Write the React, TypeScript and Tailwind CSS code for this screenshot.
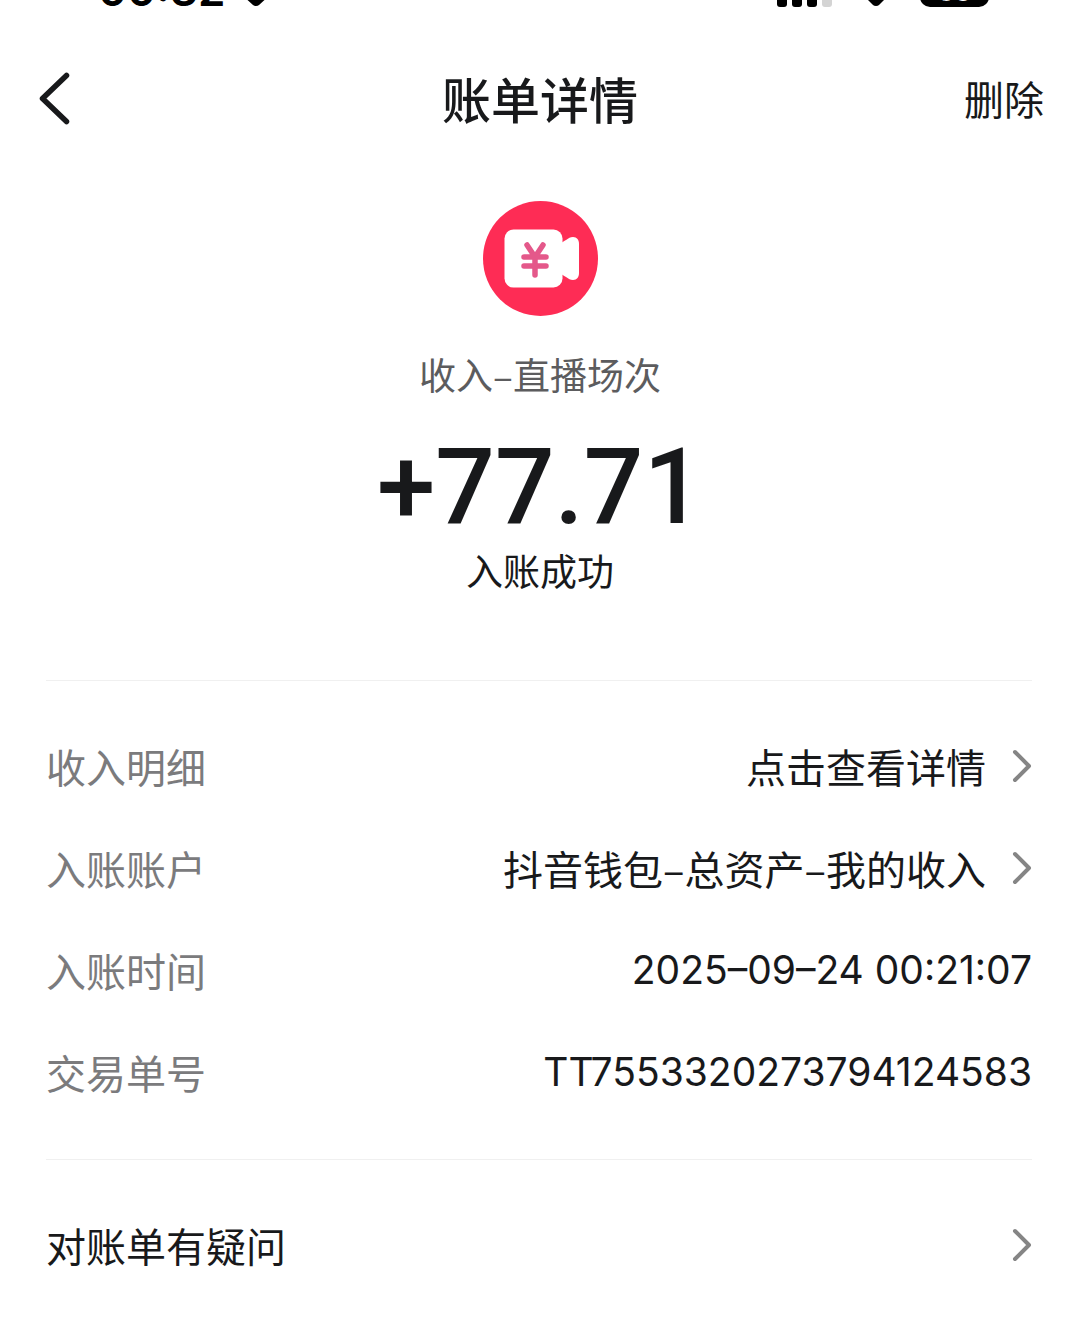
import type { ReactNode } from 'react'

const rows: Array<{ label: string; value: string; link?: boolean }> = [
    { label: '收入明细', value: '点击查看详情', link: true },
    { label: '入账账户', value: '抖音钱包–总资产–我的收入', link: true },
    { label: '入账时间', value: '2025–09–24 00:21:07' },
    { label: '交易单号', value: 'TT7553320273794124583' },
]

function Chevron() {
    return (
        <svg className="w-5 h-9 shrink-0" viewBox="0 0 20 36" fill="none" stroke="#858585" strokeWidth="4" aria-hidden="true">
            <path d="M3 4 17 18 3 32" strokeLinecap="round" strokeLinejoin="round" />
        </svg>
    )
}

function LiveIcon() {
    return (
        <svg className="w-[115px] h-[115px]" viewBox="0 0 115 115" aria-hidden="true">
            <circle cx="57.5" cy="57.5" r="57.5" fill="#fe2c55" />
            <rect x="21.5" y="28.5" width="58" height="58" rx="9" fill="#fff" />
            <path d="M78 42c2-1 3-2 5-3 3-2 4-3 7-3 4 0 6 3 6 7v29c0 4-2 7-6 7-3 0-4-1-7-3-2-1-3-2-5-3z" fill="#fff" />
            <path d="M44 44 52 56 60 44M41 56h22M41 65h22M52 56v18" fill="none" stroke="#e4588a" strokeWidth="5.5" strokeLinecap="round" strokeLinejoin="round" />
        </svg>
    )
}

function StatusBar() {
    return (
        <div className="h-2 overflow-hidden flex items-end justify-between pl-[98px] pr-[91px] text-black font-['Inter',sans-serif]">
            <div className="flex items-end gap-4">
                <span className="text-[44px] leading-9 font-semibold">00:32</span>
                <svg className="w-8 h-8" viewBox="0 0 32 32" aria-hidden="true">
                    <path d="M14 30Q12 30 11 29L0 19V8h28v11L17 29Q16 30 14 30z" />
                </svg>
            </div>
            <div className="flex items-end">
                <svg className="w-14 h-8" viewBox="0 0 56 32" aria-hidden="true">
                    <rect x="1" y="20" width="10" height="11" rx="3" />
                    <rect x="16" y="14" width="10" height="17" rx="3" />
                    <rect x="31" y="8" width="10" height="23" rx="3" />
                    <rect x="46" y="0" width="10" height="31" rx="3" fill="#d4d4d4" />
                </svg>
                <svg className="w-10 h-8 ml-6" viewBox="0 0 40 32" aria-hidden="true">
                    <path d="M20 30q-2 0-3-1l-6-6q9-8 18 0l-6 6q-1 1-3 1z" />
                </svg>
                <span className="flex items-center justify-center w-[69px] h-8 ml-6 mb-px rounded-[10px] bg-black text-white text-[26px] font-bold">68</span>
            </div>
        </div>
    )
}

function Section({ children }: { children: ReactNode }) {
    return <section className="ml-[46px] mr-12 border-t border-[#f0f0f0]">{children}</section>
}

export default function App() {
    return (
        <div className="min-h-screen bg-white text-[#18191b] font-['Noto_Sans_CJK_SC',sans-serif]" lang="zh-CN">
            <StatusBar />

            <header className="grid grid-cols-3 items-center h-[100px] mt-10 px-9">
                <button className="justify-self-start" aria-label="返回">
                    <svg className="w-9 h-14" viewBox="0 0 36 56" fill="none" stroke="currentColor" strokeWidth="5.5" aria-hidden="true">
                        <path d="M30.5 5.5 6.5 28.5 30.5 51.5" strokeLinecap="round" strokeLinejoin="round" />
                    </svg>
                </button>
                <h1 className="text-center text-[49px] leading-[60px] font-medium">账单详情</h1>
                <button className="justify-self-end text-[40px] leading-[48px]">删除</button>
            </header>

            <div className="flex flex-col items-center pt-[53px] pb-[86px]">
                <LiveIcon />
                <p className="mt-[34px] text-[37px] leading-[48px] text-[#5c5c5e]">收入–直播场次</p>
                <p className="mt-10 text-[105px] leading-[100px] font-medium font-['Roboto',sans-serif]">+77.71</p>
                <p className="mt-2 text-[37px] leading-[48px]">入账成功</p>
            </div>

            <Section>
                <dl className="pt-[34px] pb-9">
                    {rows.map(r => (
                        <div key={r.label} className="flex items-center justify-between h-[102px] text-[40px] leading-[48px]">
                            <dt className="text-[#7b7b7d]">{r.label}</dt>
                            {r.link ? (
                                <dd><button className="flex items-center gap-[26px]">{r.value}<Chevron /></button></dd>
                            ) : (
                                <dd className="text-[39px] font-['Inter',sans-serif]">{r.value}</dd>
                            )}
                        </div>
                    ))}
                </dl>
            </Section>

            <Section>
                <button className="flex items-center justify-between w-full h-[102px] mt-[34px] text-[40px] leading-[48px]">
                    对账单有疑问
                    <Chevron />
                </button>
            </Section>
        </div>
    )
}
